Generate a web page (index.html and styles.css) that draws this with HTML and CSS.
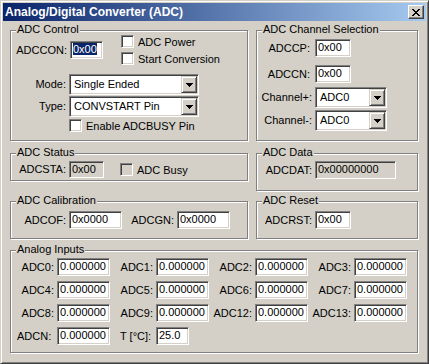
FILE: index.html
```html
<!DOCTYPE html>
<html>
<head>
<meta charset="utf-8">
<link rel="stylesheet" href="styles.css">
</head>
<body>
<div class="window">
  <div class="titlebar">
    <span class="title">Analog/Digital Converter (ADC)</span>
    <span class="close"><svg width="8" height="7" viewBox="0 0 8 7" shape-rendering="crispEdges"><path d="M0 0h2v1H0zM6 0h2v1H6zM1 1h2v1H1zM5 1h2v1H5zM2 2h4v1H2zM3 3h2v1H3zM2 4h4v1H2zM1 5h2v1H1zM5 5h2v1H5zM0 6h2v1H0zM6 6h2v1H6z" fill="#000"/></svg></span>
  </div>
  <div class="content">
    <div class="col">
      <div class="group g-control">
        <span class="legend">ADC Control</span>
        <div class="ctrl-top">
          <div class="row r-adccon">
            <span class="lbl w59">ADCCON:</span>
            <span class="edit w33"><span class="sel">0x00</span></span>
          </div>
          <div class="checks">
            <div class="check"><span class="chk"></span><span>ADC Power</span></div>
            <div class="check"><span class="chk"></span><span>Start Conversion</span></div>
          </div>
        </div>
        <div class="row r-mode">
          <span class="lbl w58">Mode:</span>
          <div class="combo w130"><span class="ctext">Single Ended</span><span class="drop"><svg width="7" height="4" viewBox="0 0 7 4" shape-rendering="crispEdges"><path d="M0 0h7v1H0zM1 1h5v1H1zM2 2h3v1H2zM3 3h1v1H3z" fill="#000"/></svg></span></div>
        </div>
        <div class="row r-type">
          <span class="lbl w58">Type:</span>
          <div class="combo w130"><span class="ctext">CONVSTART Pin</span><span class="drop"><svg width="7" height="4" viewBox="0 0 7 4" shape-rendering="crispEdges"><path d="M0 0h7v1H0zM1 1h5v1H1zM2 2h3v1H2zM3 3h1v1H3z" fill="#000"/></svg></span></div>
        </div>
        <div class="check r-busy"><span class="chk"></span><span>Enable ADCBUSY Pin</span></div>
      </div>
      <div class="group g-status">
        <span class="legend">ADC Status</span>
        <div class="row r-first">
          <span class="lbl w58">ADCSTA:</span>
          <span class="edit ro w35 h17">0x00</span>
          <div class="check c-adcbusy"><span class="chk dis"></span><span>ADC Busy</span></div>
        </div>
      </div>
      <div class="group g-calib">
        <span class="legend">ADC Calibration</span>
        <div class="row r-first9">
          <span class="lbl w58">ADCOF:</span>
          <span class="edit w53">0x0000</span>
          <span class="lbl w55">ADCGN:</span>
          <span class="edit w53">0x0000</span>
        </div>
      </div>
    </div>
    <div class="col">
      <div class="group g-channel">
        <span class="legend">ADC Channel Selection</span>
        <div class="row r-adccp">
          <span class="lbl w58 pr5">ADCCP:</span>
          <span class="edit w36">0x00</span>
        </div>
        <div class="row r-adccn">
          <span class="lbl w58 pr5">ADCCN:</span>
          <span class="edit w36">0x00</span>
        </div>
        <div class="row r-chp">
          <span class="lbl w58">Channel+:</span>
          <div class="combo w72"><span class="ctext">ADC0</span><span class="drop"><svg width="7" height="4" viewBox="0 0 7 4" shape-rendering="crispEdges"><path d="M0 0h7v1H0zM1 1h5v1H1zM2 2h3v1H2zM3 3h1v1H3z" fill="#000"/></svg></span></div>
        </div>
        <div class="row r-chm">
          <span class="lbl w58">Channel-:</span>
          <div class="combo w72"><span class="ctext">ADC0</span><span class="drop"><svg width="7" height="4" viewBox="0 0 7 4" shape-rendering="crispEdges"><path d="M0 0h7v1H0zM1 1h5v1H1zM2 2h3v1H2zM3 3h1v1H3z" fill="#000"/></svg></span></div>
        </div>
      </div>
      <div class="group g-data">
        <span class="legend">ADC Data</span>
        <div class="row r-first">
          <span class="lbl w58">ADCDAT:</span>
          <span class="edit ro w81">0x00000000</span>
        </div>
      </div>
      <div class="group g-reset">
        <span class="legend">ADC Reset</span>
        <div class="row r-first9">
          <span class="lbl w58">ADCRST:</span>
          <span class="edit w36">0x00</span>
        </div>
      </div>
    </div>
    <div class="group g-analog">
      <span class="legend">Analog Inputs</span>
      <div class="agrid">
        <span class="lbl">ADC0:</span><span class="edit">0.000000</span>
        <span class="lbl">ADC1:</span><span class="edit">0.000000</span>
        <span class="lbl">ADC2:</span><span class="edit">0.000000</span>
        <span class="lbl">ADC3:</span><span class="edit">0.000000</span>
        <span class="lbl">ADC4:</span><span class="edit">0.000000</span>
        <span class="lbl">ADC5:</span><span class="edit">0.000000</span>
        <span class="lbl">ADC6:</span><span class="edit">0.000000</span>
        <span class="lbl">ADC7:</span><span class="edit">0.000000</span>
        <span class="lbl">ADC8:</span><span class="edit">0.000000</span>
        <span class="lbl">ADC9:</span><span class="edit">0.000000</span>
        <span class="lbl">ADC12:</span><span class="edit">0.000000</span>
        <span class="lbl">ADC13:</span><span class="edit">0.000000</span>
        <span class="lbl lft l-adcn">ADCN:</span><span class="edit">0.000000</span>
        <span class="lbl lft l-t">T [°C]:</span><span class="edit w33">25.0</span>
      </div>
    </div>
  </div>
</div>
</body>
</html>
```

FILE: styles.css
```css
* { box-sizing: border-box; }
html, body { margin: 0; padding: 0; }
body {
  background: #D4D0C8;
  font-family: "Liberation Sans", Arial, sans-serif;
  font-size: 11px;
  color: #000;
}
.window {
  width: 429px;
  height: 364px;
  background: #D4D0C8;
  border: 1px solid;
  border-color: #D4D0C8 #404040 #404040 #D4D0C8;
  box-shadow: inset 1px 1px #fff, inset -1px -1px #808080;
  padding: 2px;
}
.titlebar {
  height: 18px;
  background: linear-gradient(to right, #0A246A, #A6CAF0);
  display: flex;
  align-items: center;
  justify-content: space-between;
  padding: 0 2px 0 2px;
}
.title {
  color: #fff;
  font-weight: bold;
  font-size: 12px;
  line-height: 14px;
  padding-left: 0;
}
.close {
  width: 16px;
  height: 14px;
  background: #D4D0C8;
  border: 1px solid;
  border-color: #fff #404040 #404040 #fff;
  box-shadow: inset -1px -1px #808080;
  display: flex;
  align-items: center;
  justify-content: center;
}
.close svg { display: block; }
.content {
  display: grid;
  grid-template-columns: 238px 162px;
  column-gap: 8px;
  row-gap: 11px;
  padding: 9px 0 0 7px;
}
.col { display: flex; flex-direction: column; }
.group {
  position: relative;
  border: 1px solid #808080;
  box-shadow: inset 1px 1px #fff, 1px 1px #fff;
}
.legend {
  position: absolute;
  top: -8px;
  left: 5px;
  padding: 0 1px;
  line-height: 13px;
  background: #D4D0C8;
  white-space: nowrap;
}
.g-control, .g-channel { height: 111px; }
.g-status { height: 28px; margin-top: 12px; }
.g-calib { height: 38px; margin-top: 20px; }
.g-data { height: 38px; margin-top: 12px; }
.g-reset { height: 38px; margin-top: 10px; }
.g-analog { grid-column: 1 / span 2; height: 103px; }

.row { display: flex; align-items: center; }
.lbl {
  text-align: right;
  padding-right: 3px;
  white-space: nowrap;
  line-height: 13px;
}
.w58 { width: 58px; }
.w59 { width: 59px; }
.w55 { width: 55px; }
.pr5 { padding-right: 5px; }

.edit {
  display: block;
  height: 18px;
  background: #fff;
  border: 1px solid;
  border-color: #808080 #fff #fff #808080;
  box-shadow: inset 1px 1px #404040, inset -1px -1px #D4D0C8;
  padding: 0 0 0 2px;
  line-height: 15px;
  white-space: nowrap;
  overflow: hidden;
}
.edit.ro { background: #D4D0C8; }
.h17 { height: 17px; }
.w33 { width: 33px; }
.w35 { width: 35px; }
.w36 { width: 36px; }
.w53 { width: 53px; }
.w81 { width: 81px; }
.w72 { width: 72px; }
.w130 { width: 130px; }
.sel { background: #0A246A; color: #fff; }

.check { display: flex; align-items: center; gap: 4px; height: 13px; white-space: nowrap; }
.chk {
  display: block;
  width: 13px;
  height: 13px;
  flex: none;
  background: #fff;
  border: 1px solid;
  border-color: #808080 #fff #fff #808080;
  box-shadow: inset 1px 1px #404040, inset -1px -1px #D4D0C8;
}
.chk.dis { background: #D4D0C8; }

.combo {
  display: flex;
  height: 21px;
  background: #fff;
  border: 1px solid;
  border-color: #808080 #fff #fff #808080;
  box-shadow: inset 1px 1px #404040, inset -1px -1px #D4D0C8;
  padding: 1px;
}
.ctext { flex: 1; padding-left: 3px; line-height: 17px; white-space: nowrap; }
.drop {
  width: 16px;
  height: 17px;
  flex: none;
  background: #D4D0C8;
  border: 1px solid;
  border-color: #D4D0C8 #404040 #404040 #D4D0C8;
  box-shadow: inset 1px 1px #fff, inset -1px -1px #808080;
  display: flex;
  align-items: center;
  justify-content: center;
}
.drop svg { display: block; }

/* ADC Control */
.ctrl-top { display: flex; align-items: flex-start; margin-top: 4px; }
.r-adccon { margin-top: 6px; }
.checks { display: flex; flex-direction: column; gap: 4px; margin-left: 18px; }
.r-mode { margin-top: 9px; }
.r-type { margin-top: 1px; }
.r-busy { margin-top: 2px; margin-left: 58px; }

/* Channel */
.r-adccp { margin-top: 8px; }
.r-adccn { margin-top: 8px; }
.r-chp { margin-top: 4px; }
.r-chm { margin-top: 2px; }

.r-first { margin-top: 7px; }
.r-first9 { margin-top: 9px; }
.c-adcbusy { margin-left: 16px; }

/* Analog */
.agrid {
  display: grid;
  grid-template-columns: repeat(4, 46px 53px);
  grid-auto-rows: 18px;
  row-gap: 5px;
  align-items: center;
  margin-top: 7px;
}
.agrid .lbl { padding-right: 3px; }
.agrid .lft { text-align: left; padding-right: 0; }
.l-adcn { padding-left: 6px; }
.l-t { padding-left: 10px; }
```
